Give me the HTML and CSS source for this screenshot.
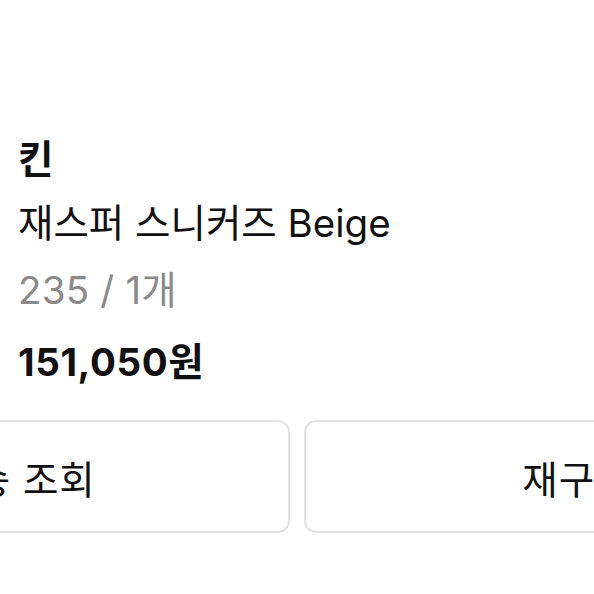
FILE: index.html
```html
<!DOCTYPE html>
<html lang="ko">
<head>
  <meta charset="UTF-8">
  <meta name="viewport" content="width=device-width, initial-scale=1.0">
  <title>주문 상품</title>
  <link rel="stylesheet" href="styles.css">
</head>
<body>

  <div class="order-item">
    <p class="brand">킨</p>
    <p class="name">재스퍼 스니커즈 Beige</p>
    <p class="option">235 / 1개</p>
    <p class="price">151,050원</p>
  </div>

  <div class="actions">
    <button type="button">배송 조회</button>
    <button type="button">재구매</button>
  </div>

</body>
</html>
```

FILE: styles.css
```css
body {
  margin: 0;
  background-color: #FFFFFF;
  color: #111111;
  font-family: Inter, "Noto Sans CJK KR", sans-serif;
  overflow: hidden;
}
.order-item {
  padding: 135px 18px 0;
}
.order-item p {
  margin: 0;
  font-size: 38.5px;
  line-height: 48px;
}
.brand {
  font-weight: bold;
}
.name {
  margin-top: 16px !important;
}
.option {
  margin-top: 19px !important;
  color: #8A8A8A;
  letter-spacing: 0.2px;
}
.price {
  margin-top: 24px !important;
  font-weight: bold;
  letter-spacing: 0.6px;
}
.actions {
  display: flex;
  gap: 14px;
  margin: 34px 0 0 -256px;
  width: 1106px;
}
.actions button {
  flex: 1;
  height: 113px;
  background-color: #FFFFFF;
  border: 2px solid #E2E2E2;
  border-radius: 12px;
  font-family: Inter, "Noto Sans CJK KR", sans-serif;
  font-size: 38.5px;
  letter-spacing: 1px;
  color: #111111;
}
```
